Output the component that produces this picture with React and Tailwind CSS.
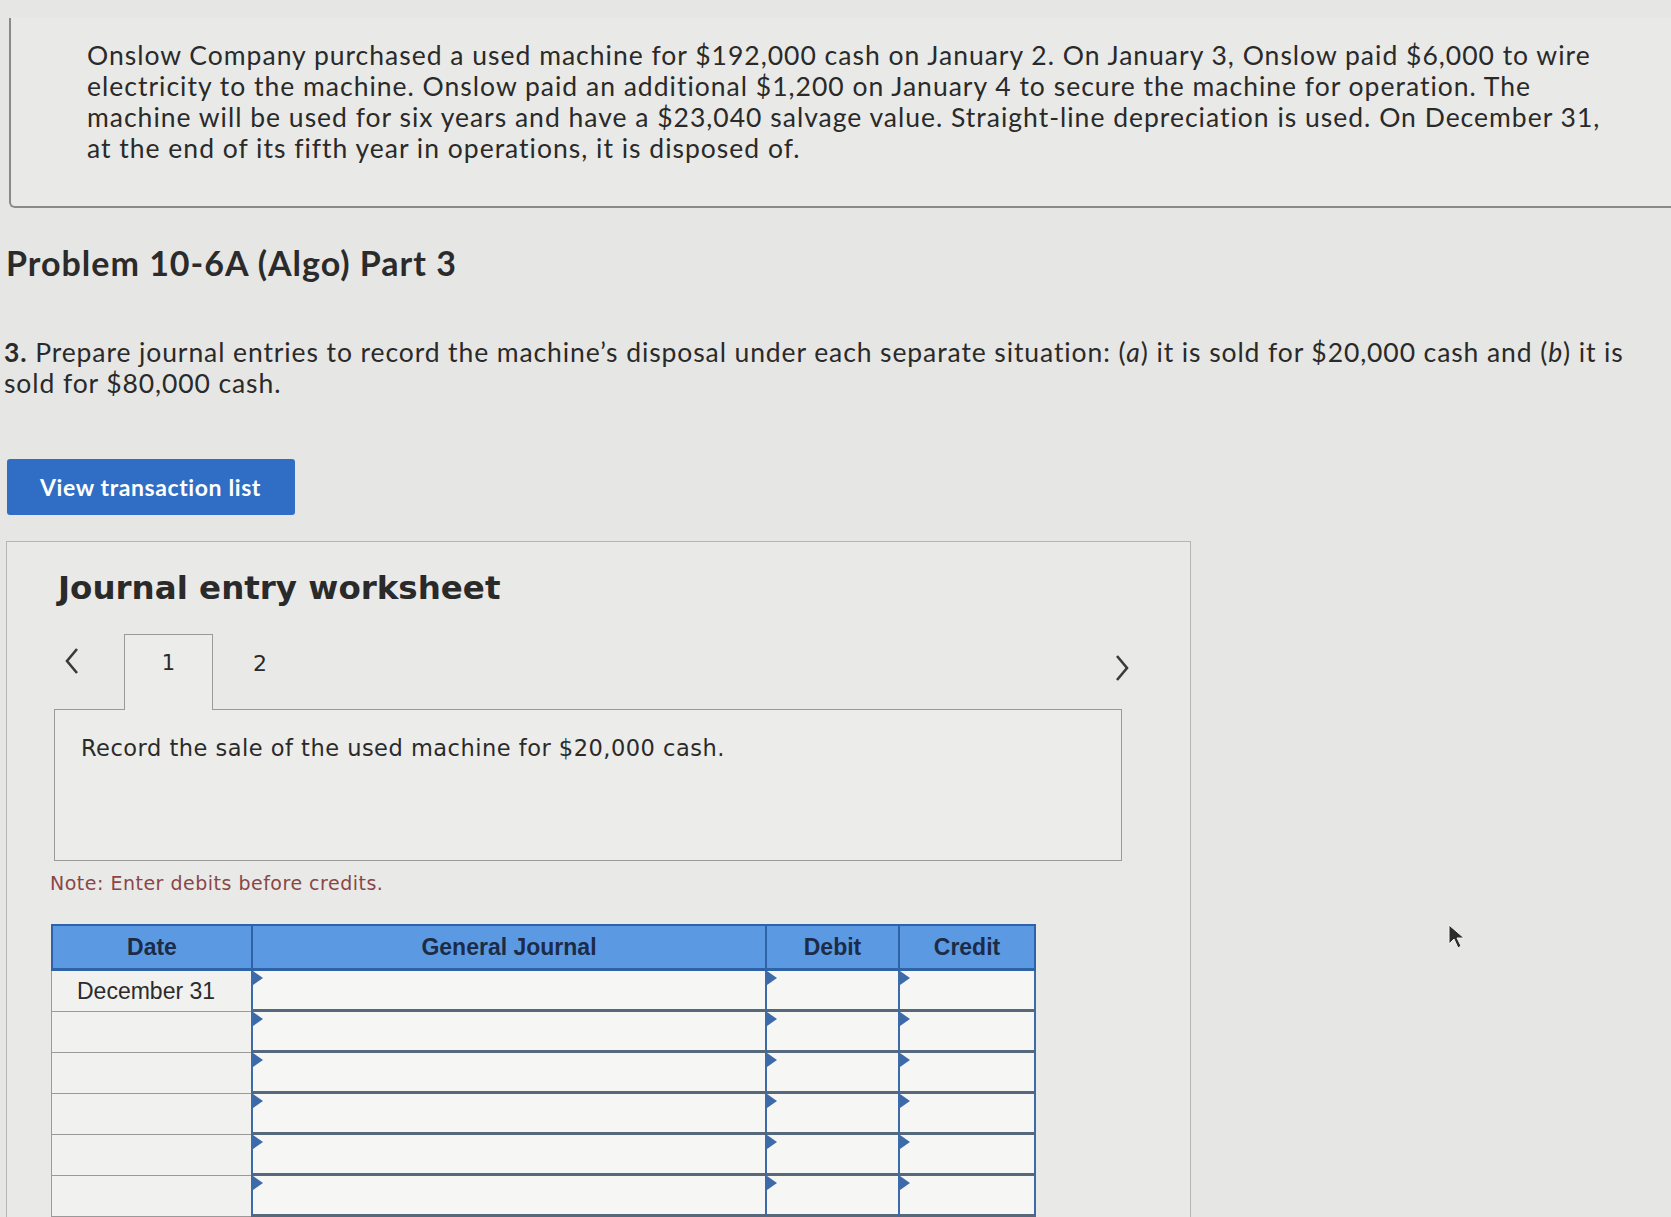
import React from "react";

const proxima = { fontFamily: "Lato, 'Open Sans', sans-serif" };

function Chevron({ dir = "left" }) {
  return (
    <svg width="16" height="28" viewBox="0 0 16 28" className="text-[#3a3a3a]">
      {dir === "left" ? (
        <path d="M13 2 L3 14 L13 26" fill="none" stroke="currentColor" strokeWidth="2.6" />
      ) : (
        <path d="M3 2 L13 14 L3 26" fill="none" stroke="currentColor" strokeWidth="2.6" />
      )}
    </svg>
  );
}

function Marker() {
  return (
    <svg width="10" height="15" viewBox="0 0 10 15" className="absolute left-0 top-0 text-[#3d6aa8]">
      <path d="M0 0 L10 7 L0 14 Z" fill="currentColor" />
    </svg>
  );
}

function InputCell({ w }) {
  return (
    <div className={`relative h-full border-l-2 border-[#3d6aa8] border-b-[3px] border-b-[#56687c] bg-[#f6f6f5] ${w}`}>
      <Marker />
    </div>
  );
}

function JournalRow({ date }) {
  return (
    <div className="flex h-[41px]">
      <div className="w-[200px] border-l border-b border-[#9a9a9a] bg-[#f1f1f0] pl-[25px] flex items-center text-[23px] text-[#2b2b2b] font-['Liberation_Sans',Arial,sans-serif]">
        {date}
      </div>
      <InputCell w="w-[514px]" />
      <InputCell w="w-[133px]" />
      <div className="relative h-full w-[138px] border-l-2 border-r-2 border-[#3d6aa8] border-b-[3px] border-b-[#56687c] bg-[#f6f6f5]">
        <Marker />
      </div>
    </div>
  );
}

export default function App() {
  const headCls =
    "h-full flex items-center justify-center font-bold text-[23px] text-[#1c2c48] font-['Liberation_Sans',Arial,sans-serif]";
  return (
    <div className="relative w-[1671px] h-[1217px] overflow-hidden bg-[#e6e6e4] text-[#2a2a2a]">
      {/* problem statement box */}
      <div className="mt-[18px] ml-[9px] h-[190px] border-l-2 border-b-2 border-[#8a8a8a] rounded-bl-[6px] bg-[#e9e9e7] pl-[76px] pt-[22px]">
        <p className="text-[26.5px] leading-[31px] tracking-[1px]" style={proxima}>
          Onslow Company purchased a used machine for $192,000 cash on January 2. On January 3, Onslow paid $6,000 to wire
          <br />
          electricity to the machine. Onslow paid an additional $1,200 on January 4 to secure the machine for operation. The
          <br />
          machine will be used for six years and have a $23,040 salvage value. Straight-line depreciation is used. On December 31,
          <br />
          at the end of its fifth year in operations, it is disposed of.
        </p>
      </div>

      <h1 className="mt-[36px] pl-[6px] text-[34px] font-bold text-[#2b2b2b] leading-[38px] tracking-[1px]" style={proxima}>
        Problem 10-6A (Algo) Part 3
      </h1>

      <p className="mt-[55px] pl-[4px] text-[26.5px] leading-[31px] tracking-[0.9px]" style={proxima}>
        <span className="font-bold">3.</span> Prepare journal entries to record the machine’s disposal under each separate situation: (<i>a</i>) it is sold for $20,000 cash and (<i>b</i>) it is
        <br />
        sold for $80,000 cash.
      </p>

      <button
        className="mt-[60px] ml-[7px] w-[288px] h-[56px] rounded-[3px] bg-[#2f6ec4] text-white font-bold text-[23px] tracking-[0.6px] text-left pl-[33px]"
        style={proxima}
      >
        View transaction list
      </button>

      {/* worksheet panel */}
      <div className="mt-[26px] ml-[6px] w-[1185px] h-[700px] border border-[#b5b5b3] bg-[#e9e9e8] pl-[47px] pt-[28px] font-['DejaVu_Sans',Verdana,sans-serif]">
        <h2 className="pl-[4px] text-[32.5px] font-bold text-[#2a2a2a] leading-[36px]">Journal entry worksheet</h2>

        <div className="mt-[27px] flex items-end w-[1076px]">
          <div className="w-[70px] h-[76px] flex items-center pl-[10px] pb-[20px]">
            <Chevron dir="left" />
          </div>
          <div className="w-[89px] h-[76px] border border-b-0 border-[#9a9a9a] bg-[#ececeb] flex items-center justify-center pb-[18px] text-[21px] relative top-[1px]">
            1
          </div>
          <div className="w-[94px] h-[76px] flex items-center justify-center pb-[16px] text-[22px]">2</div>
          <div className="flex-1 h-[76px] flex items-center justify-end pb-[6px]">
            <Chevron dir="right" />
          </div>
        </div>

        <div className="w-[1068px] h-[152px] border border-[#9a9a9a] bg-[#ececeb] pl-[26px] pt-[25px] text-[22.5px] leading-[27px] tracking-[0.5px] text-[#2a2a2a]">
          Record the sale of the used machine for $20,000 cash.
        </div>

        <p className="-ml-[4px] mt-[10px] text-[19px] leading-[24px] tracking-[0.5px] text-[#8a4646]">Note: Enter debits before credits.</p>

        {/* journal table */}
        <div className="-ml-[3px] mt-[29px] w-[985px]">
          <div className="flex h-[47px] bg-[#5b9ae2] border-t-2 border-b-[3px] border-[#2f63a8]">
            <div className={`w-[200px] border-l-2 border-[#2f63a8] ${headCls}`}>Date</div>
            <div className={`w-[514px] border-l-2 border-[#2f63a8] ${headCls}`}>General Journal</div>
            <div className={`w-[133px] border-l-2 border-[#2f63a8] ${headCls}`}>Debit</div>
            <div className={`w-[138px] border-l-2 border-r-2 border-[#2f63a8] ${headCls}`}>Credit</div>
          </div>
          <JournalRow date="December 31" />
          <JournalRow date="" />
          <JournalRow date="" />
          <JournalRow date="" />
          <JournalRow date="" />
          <JournalRow date="" />
        </div>
      </div>

      {/* mouse cursor */}
      <svg className="absolute left-[1447px] top-[924px]" width="20" height="28" viewBox="0 0 20 28">
        <path d="M2 1 L2 20 L7 15 L11 24 L14 22 L10 14 L17 14 Z" fill="#2c2c2c" stroke="#f2f2f2" strokeWidth="1" />
      </svg>
    </div>
  );
}
